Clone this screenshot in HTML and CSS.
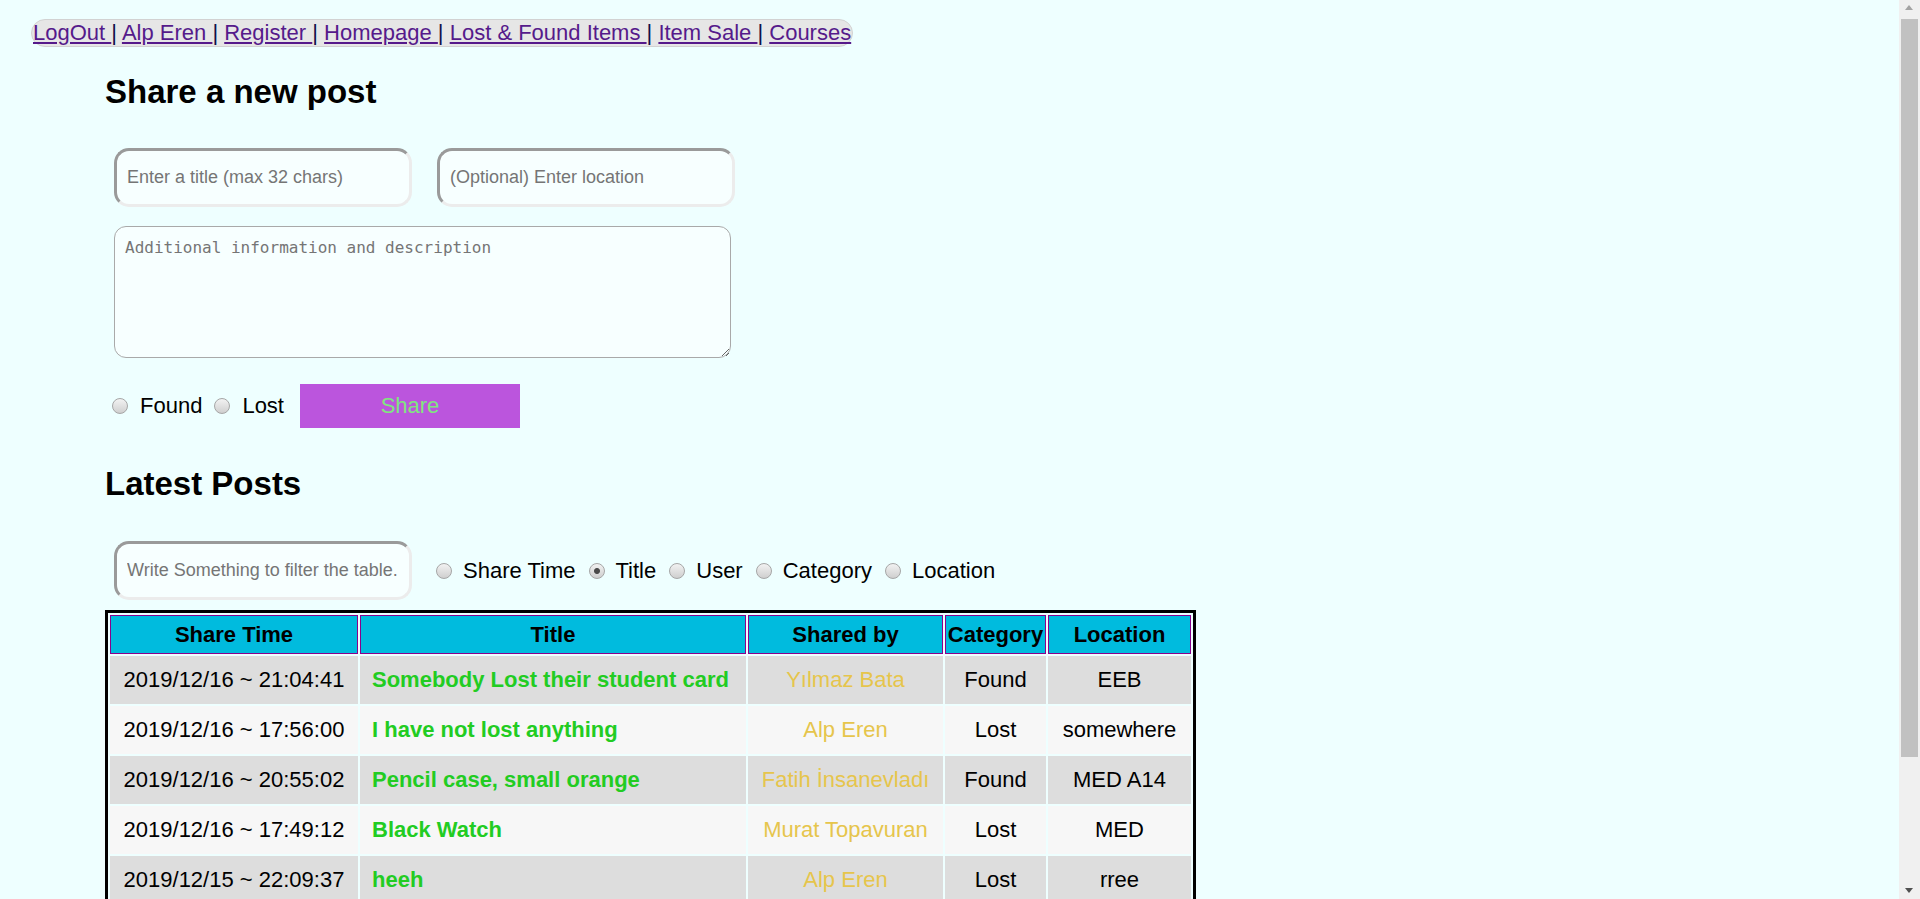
FILE: index.html
```html
<!DOCTYPE html>
<html lang="en">
<head>
<meta charset="utf-8">
<title>Lost &amp; Found Items</title>
<link rel="stylesheet" href="styles.css">
</head>
<body>
<div class="topbar">
  <nav class="navbox"><a href="#">LogOut </a>| <a href="#">Alp Eren </a>| <a href="#">Register </a>| <a href="#">Homepage </a>| <a href="#">Lost &amp; Found Items </a>| <a href="#">Item Sale </a>| <a href="#">Courses</a></nav>
</div>
<main class="main">
  <h2 class="heading heading-first">Share a new post</h2>
  <div class="inputs">
    <input class="field" type="text" placeholder="Enter a title (max 32 chars)">
    <input class="field" type="text" placeholder="(Optional) Enter location">
  </div>
  <textarea class="desc" placeholder="Additional information and description"></textarea>
  <div class="choice">
    <input class="radio" type="radio" name="kind" id="k1"><label class="opt" for="k1">Found</label>
    <input class="radio" type="radio" name="kind" id="k2"><label class="opt" for="k2">Lost</label>
    <button class="share" type="button">Share</button>
  </div>
  <h2 class="heading heading-second">Latest Posts</h2>
  <div class="filter">
    <input class="field" type="text" placeholder="Write Something to filter the table.">
    <div class="opts">
      <input class="radio" type="radio" name="by" id="f1"><label class="opt" for="f1">Share Time</label>
      <input class="radio" type="radio" name="by" id="f2" checked><label class="opt" for="f2">Title</label>
      <input class="radio" type="radio" name="by" id="f3"><label class="opt" for="f3">User</label>
      <input class="radio" type="radio" name="by" id="f4"><label class="opt" for="f4">Category</label>
      <input class="radio" type="radio" name="by" id="f5"><label class="opt" for="f5">Location</label>
    </div>
  </div>
  <table class="posts">
    <colgroup>
      <col class="c-time"><col class="c-title"><col class="c-user"><col class="c-cat"><col class="c-loc">
    </colgroup>
    <thead>
      <tr><th>Share Time</th><th>Title</th><th>Shared by</th><th>Category</th><th>Location</th></tr>
    </thead>
    <tbody>
      <tr><td>2019/12/16 ~ 21:04:41</td><td class="title">Somebody Lost their student card</td><td class="user">Yılmaz Bata</td><td>Found</td><td>EEB</td></tr>
      <tr><td>2019/12/16 ~ 17:56:00</td><td class="title">I have not lost anything</td><td class="user">Alp Eren</td><td>Lost</td><td>somewhere</td></tr>
      <tr><td>2019/12/16 ~ 20:55:02</td><td class="title">Pencil case, small orange</td><td class="user">Fatih İnsanevladı</td><td>Found</td><td>MED A14</td></tr>
      <tr><td>2019/12/16 ~ 17:49:12</td><td class="title">Black Watch</td><td class="user">Murat Topavuran</td><td>Lost</td><td>MED</td></tr>
      <tr><td>2019/12/15 ~ 22:09:37</td><td class="title">heeh</td><td class="user">Alp Eren</td><td>Lost</td><td>rree</td></tr>
    </tbody>
  </table>
</main>
<div class="scrollbar" aria-hidden="true">
  <span class="sb-up"></span>
  <span class="sb-thumb"></span>
  <span class="sb-down"></span>
</div>
</body>
</html>
```

FILE: styles.css
```css
html, body {
  margin: 0;
  padding: 0;
}

body {
  background: #eeffff;
  font-family: "Liberation Sans", Arial, sans-serif;
  font-size: 22px;
  color: #000;
}

.topbar {
  display: flex;
  padding: 19px 0 0 31px;
}

.navbox {
  display: block;
  line-height: 26px;
  background: #e6e6e6;
  border: 1px solid #d2d2d2;
  border-radius: 14px;
  padding: 0 1px 0 1px;
  color: #10104a;
  white-space: nowrap;
}

.navbox a {
  color: #551a8b;
  text-decoration: underline;
}

.main {
  padding: 0 0 8px 105px;
}

.heading {
  margin: 0;
  font-size: 33px;
  font-weight: bold;
  line-height: 38px;
}

.heading-first {
  margin-top: 26px;
}

.heading-second {
  margin-top: 37px;
}

.inputs {
  display: flex;
  gap: 25px;
  margin: 37px 0 0 9px;
}

.field {
  width: 298px;
  height: 59px;
  box-sizing: border-box;
  margin: 0;
  padding: 0 10px;
  border-style: solid;
  border-width: 3px;
  border-color: #9a9a9a #ececec #ececec #9a9a9a;
  border-radius: 15px;
  background: #f7ffff;
  font-family: "Liberation Sans", Arial, sans-serif;
  font-size: 18px;
  color: #333;
  outline: none;
}

.field::placeholder {
  color: #757575;
}

.desc {
  display: block;
  width: 617px;
  height: 132px;
  box-sizing: border-box;
  margin: 19px 0 0 9px;
  padding: 11px 10px;
  border: 1px solid #a9a9a9;
  border-radius: 12px;
  background: #f7ffff;
  font-family: "DejaVu Sans Mono", "Liberation Mono", monospace;
  font-size: 16px;
  resize: both;
  outline: none;
}

.desc::placeholder {
  color: #757575;
}

.choice {
  display: flex;
  align-items: center;
  margin: 26px 0 0 7px;
}

.radio {
  appearance: none;
  -webkit-appearance: none;
  flex: none;
  width: 16px;
  height: 16px;
  margin: 0 12px 0 0;
  box-sizing: border-box;
  border: 1px solid #a6a6a6;
  border-radius: 50%;
  background: linear-gradient(#f2f2f2, #cfcfcf);
}

.radio:checked {
  background: radial-gradient(circle, #4a4a4a 0, #4a4a4a 2.5px, transparent 3.5px), linear-gradient(#f2f2f2, #cfcfcf);
}

.opt {
  margin-right: 12px;
  line-height: 26px;
}

.choice .opt:last-of-type {
  margin-right: 16px;
}

.share {
  width: 220px;
  height: 44px;
  margin: 0;
  border: none;
  background: #bb55dd;
  color: #80e680;
  font-family: "Liberation Sans", Arial, sans-serif;
  font-size: 22px;
  padding: 0;
}

.filter {
  display: flex;
  align-items: center;
  margin: 38px 0 0 9px;
}

.opts {
  display: flex;
  align-items: center;
  margin-left: 24px;
}

.opts .radio {
  margin-right: 11px;
}

.opts .opt {
  margin-right: 13px;
}

.posts {
  margin-top: 10px;
  width: 1091px;
  box-sizing: border-box;
  table-layout: fixed;
  border: 3px solid #000;
  border-spacing: 2px;
  font-size: 22px;
}

.c-time { width: 248px; }
.c-title { width: 386px; }
.c-user { width: 195px; }
.c-cat { width: 101px; }
.c-loc { width: 143px; }

.posts th {
  height: 39px;
  box-sizing: border-box;
  padding: 0 1px;
  background: #00bbde;
  border: 1px solid #8b008b;
  font-weight: bold;
  text-align: center;
  white-space: nowrap;
}

.posts td {
  height: 48px;
  box-sizing: border-box;
  padding: 0 2px;
  text-align: center;
  white-space: nowrap;
  overflow: hidden;
}

.posts tbody tr:nth-child(odd) td {
  background: #dddddd;
}

.posts tbody tr:nth-child(even) td {
  background: #f7f7f7;
}

.posts td.title {
  text-align: left;
  padding-left: 12px;
  font-weight: bold;
  color: #22cc22;
}

.posts td.user {
  color: #e6c54c;
}

/* page scrollbar, drawn over the right edge */
.scrollbar {
  position: fixed;
  top: 0;
  right: 0;
  width: 21px;
  height: 100vh;
  background: #f0f0f0;
}

.sb-thumb {
  position: absolute;
  left: 2px;
  right: 2px;
  top: 19px;
  height: 738px;
  background: #c1c1c1;
}

.sb-up,
.sb-down {
  position: absolute;
  left: 6px;
  width: 0;
  height: 0;
  border-left: 4.5px solid transparent;
  border-right: 4.5px solid transparent;
}

.sb-up {
  top: 5px;
  border-bottom: 5px solid #a3a3a3;
}

.sb-down {
  bottom: 6px;
  border-top: 5px solid #505050;
}
```
